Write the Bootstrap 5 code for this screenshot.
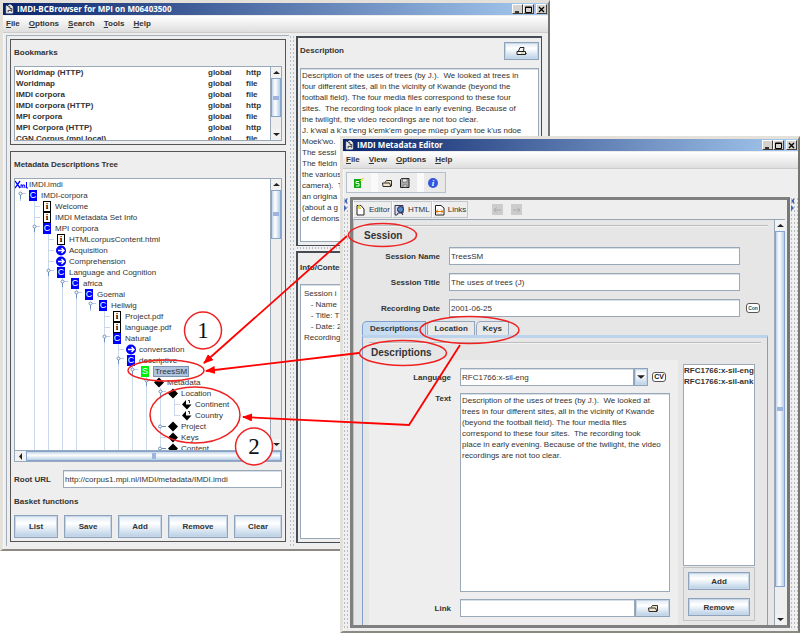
<!DOCTYPE html>
<html lang="en">
<head>
<meta charset="utf-8">
<meta name="viewport" content="width=device-width, initial-scale=1">
<title>IMDI-BCBrowser and IMDI Metadata Editor</title>
<link href="https://cdn.jsdelivr.net/npm/bootstrap@5.3.0/dist/css/bootstrap.min.css" rel="stylesheet">
<style>
:root{--edge:#99a9ba;--face:#eee;--guide:#c9d9ea;--ink:#333}
body{font-family:"Liberation Sans",Arial,sans-serif;font-size:8px;line-height:11px;color:var(--ink);background:#fff}
.desktop{position:relative;min-height:100vh;overflow:hidden}
.shrinkable{min-width:0;min-height:0}
.win{position:absolute;background:var(--face);border:3px solid #e3e1da;border-right:2px solid #77756f;border-bottom:2px solid #8b8982;box-shadow:inset 1px 1px 0 #f8f8f5}
.win-browser{left:0;top:0;width:calc(69% - 2px);height:551px}
.win-editor{left:340px;top:136px;right:0;bottom:0}
.titlebar{height:12px;margin-bottom:1px;padding:0 1px 0 2px;gap:3px;background:linear-gradient(90deg,#0a246a,#a6caf0);color:#fff;font:bold 8px/12px "Open Sans","Noto Sans",sans-serif}
.titlebar svg{width:9px;height:10px}
.winbtn{width:11px;height:10px;padding:0;border:1px solid;border-color:#fff #404040 #404040 #fff;background:#d6d3ce;display:flex;align-items:center;justify-content:center}
.winbtn:last-child{margin-left:2px}
.winbtn svg{width:7px;height:7px}
.menus{height:17px;padding:0 3px;gap:9px;background:linear-gradient(#fff,#dedede);border-bottom:1px solid #ccc;font-weight:bold}
.menus a{color:var(--ink);text-decoration:none;line-height:15px}
.browser-body{padding:2px 6px 3px 3px}
.panel{border:1px solid #555;padding:3px;min-height:0}
.sunk{border:2px solid #454c54;border-right-width:1px;border-bottom-width:1px;padding:4px 2px 3px}
.panel h2,.cap{font-size:8px;line-height:11px;font-weight:bold;margin:0}
.bookmarks{flex:0 0 106px;margin-bottom:6px}
.panel-desc{flex:0 0 210px}
.panel-info h2{padding:5px 0 11px}
.well{background:#fff;border:1px solid var(--edge);min-width:0;min-height:0;overflow:hidden}
.left-pane{flex:0 0 283px;border-left:1px solid #a4b0bc;border-top:1px solid #a4b0bc;padding:3px 3px 4px}
.right-pane{min-width:0;padding:1px 0 3px 2px}
.grip{flex:0 0 5px;background:radial-gradient(circle,#b4bcc6 0 1px,transparent 1px) 0 0/3px 4px,#f0f0f0}
.grip.west{flex-basis:7px}
.grip.east{flex-basis:8px}
.vbar{flex:0 0 11px;border-left:1px solid var(--edge);background:#eee;display:flex;flex-direction:column}
.vbar button,.hbar button{border:0;padding:0;background:#f2f2f2;flex:0 0 11px;display:flex;align-items:center;justify-content:center;line-height:0}
.vbar svg,.hbar svg{width:7px;height:7px}
.thumb{border:1px solid #86a4d0;background:linear-gradient(90deg,#c3d5e9,#fff 40%,#b8cfe5);display:flex;align-items:center;justify-content:center}
.thumb::after{content:"";width:6px;height:4px;background:#9db4dc}
.hbar{flex:0 0 11px;border-top:1px solid var(--edge);display:flex;background:#eee}
.hbar .thumb{background:linear-gradient(#c3d5e9,#fff 40%,#b8cfe5);flex:1}
.hbar .thumb::after{width:4px;height:6px}
.marks{width:100%;font-weight:bold;border-collapse:collapse;table-layout:fixed;margin-left:1px}
.marks td{padding:0;height:11px;line-height:11px;white-space:nowrap}
.marks .scope{width:38px}
.marks .proto{width:25px}
.tree,.tree ul{list-style:none;margin:0;padding:0}
.tree{margin-left:-2px;white-space:nowrap}
.tree ul{margin-left:14px;background:linear-gradient(var(--guide),var(--guide)) 7px 0/1px 100% no-repeat}
.tree ul.root-level{margin-left:0}
.tree ul.only{background:none}
.tree ul.closed{background-size:1px calc(100% - 5px)}
.node{height:11px;display:flex;align-items:center}
.node svg{flex:none;width:14px;height:11px;display:block}
.node b{flex:none;width:8px;height:11px;margin:0 4px 0 2px;text-align:center;font:9px/11px "Liberation Sans",sans-serif;color:#fff;background:#00f}
.node b.inf{background:#fff;color:#000;border:1px solid #000;font-weight:bold;line-height:9px;font-family:"Liberation Serif",serif}
.node b.ses{background:#0e0}
.node em{font-style:normal}
.node .sel{background:#b0c4de;border:1px solid #7e93b0;line-height:9px;padding:0 1px}
.cap.url{flex:0 0 49px}
.basket{gap:6px}
.field{background:#fff;border:1px solid var(--edge);border-radius:0;padding:0 1px;font-size:8px;line-height:11px;color:var(--ink);height:18px;min-width:0;box-shadow:inset 0 1px 0 #d8dfe6}
textarea.field{display:block;width:100%;height:auto;resize:none;overflow:hidden;white-space:pre;padding:1px}
textarea.field.roomy{padding:3px}
.jbtn{border:1px solid #8da3bb;border-radius:0;background:linear-gradient(#dfe9f3,#fff 35%,#b8cfe5);font-size:8px;line-height:11px;font-weight:bold;color:var(--ink);padding:0;height:18px;box-shadow:inset 0 0 0 1px #c7d6e6;display:flex;align-items:center;justify-content:center}
.jbtn.wide{width:35px}
.jbtn.drop{width:14px}
.basket .jbtn{height:23px;flex:1 1 0;padding:0 1px}
.basket .jbtn:nth-child(4){flex-grow:1.4}
.basket .jbtn:nth-child(2),.basket .jbtn:nth-child(5){flex-grow:1.1}
.toolset-row{padding:3px}
.toolset{border:1px solid #b4c0cc;height:21px;padding:0 3px;background:linear-gradient(90deg,#f4f4f4,#e8e8e8)}
.toolset i{width:7px;height:19px;margin:0 3px;background:#fafafa}
.toolset button,.views button{border:0;background:none;padding:0;display:flex;align-items:center}
.toolset button{margin:0 3px}
.toolset i+button{margin-left:0}
.toolset svg{width:12px;height:12px}
.editor-body{padding:1px 0 3px}
.editor-frame{border:3px solid #808080;border-right-color:#777;padding-right:2px;min-width:0;min-height:0}
.views{height:17px;margin:1px 0}
.views button{border:1px solid #c3c8ce;border-left-color:#fff;background:#eee;height:17px;gap:3px;padding:0 1px;font-size:8px;color:var(--ink)}
.views svg{width:11px;height:12px}
.views .steps{gap:8px;margin-left:24px}
.sheet{background:#e6e6e6;border-top:1px solid #96a4b4;border-left:1px solid #b7c3cf;min-height:0}
.sheet-body{min-width:0;padding:5px 6px 0 8px}
.big{font-size:10px;line-height:13px;font-weight:bold;margin:0;padding:3px 0 1px 2px}
.session{gap:8px;margin-top:4px;padding-right:8px}
.lab{font-weight:bold;text-align:right;flex:none;width:78px;margin-right:9px}
.light .lab{width:82px}
.tail{width:20px}
.rule{height:1px;background:#bdbdbd;box-shadow:0 1px 0 #f2f2f2}
.tabs{gap:1px;border:0;margin-top:4px}
.tabs .nav-link{border:1px solid #94a6bd;border-bottom:0;border-radius:5px 0 0 0;background:#e9e9e9;color:var(--ink);font-weight:bold;font-size:8px;line-height:11px;padding:1px 6px;height:14px;margin:0}
.tabs .nav-link.active{background:#c8dcf2;color:var(--ink);border-color:#7f9fcc;padding:1px 7px}
.tabpane{border:1px solid #7f9fcc;border-top:3px solid #bcd3ee;border-bottom:0;min-height:0;padding:4px 6px 0 6px}
.split{min-height:0;padding-right:6px}
.light{background:#eee;min-width:0;padding:8px 8px 8px 0;gap:7px}
.langs{flex:0 0 77px;padding:4px 0 4px 5px}
.langs .well{white-space:nowrap}
.langbtns{border:1px solid #c4c4c4;margin-top:1px;padding:4px;gap:8px}
.tiny{border:1px solid #555;border-radius:3px;background:#fff;height:10px;width:14px;padding:0;line-height:8px;font-weight:bold;font-size:7px;color:#111;flex:none}
.tiny.cv{margin:0 4px}
.tiny.con{font-size:5px;color:#0a5870}
.notes{position:absolute;left:0;top:0;width:800px;height:633px;pointer-events:none}
.notes text{font:23px "Liberation Serif",serif;fill:#111;text-anchor:middle}
</style>
<script src="https://cdn.jsdelivr.net/npm/bootstrap@5.3.0/dist/js/bootstrap.bundle.min.js"></script>
</head>
<body>
<svg width="0" height="0" class="position-absolute" aria-hidden="true">
<defs>
<g id="doc"><path d="M1 2V10H8V3L6 1H4L3 3Z" fill="#eee" stroke="#ddd"/><path d="M3 3h2v2h2v2H3v2M6 8h1" stroke="#222" fill="none"/></g>
<path id="up" d="M0 5L3.500 2L7 5Z" fill="#222"/>
<path id="down" d="M0 2L3.500 5L7 2Z" fill="#222"/>
<path id="leftw" d="M5 0L2 3.500L5 7Z" fill="#222"/>
<g id="open" fill="none" stroke="#6c8fc0"><path d="M7.500 5V11M9 3.500H13" stroke="#b9cde4"/><path d="M7.500 5V9"/><circle cx="7.500" cy="3.500" r="1.500" fill="#fff"/></g>
<g id="shut" fill="none" stroke="#6c8fc0"><path d="M9 5.500H13"/><circle cx="7" cy="5.500" r="1.500" fill="#fff"/></g>
<path id="leaf" d="M8 5.500H13" stroke="#c9d9ea"/>
<g id="go"><circle cx="6" cy="5.500" r="5" fill="#00f"/><path d="M3 5.500H9M6.500 3L9 5.500L6.500 8" stroke="#fff" stroke-width="1.400" fill="none"/></g>
<path id="dia" d="M6 0.500L11 5.500L6 10.500L1 5.500Z" fill="#000"/>
<g id="part"><path d="M5 1V5.500H10.500L6 10.500L1 5.500Z" fill="#000"/><path d="M7 1.500H8.500V4" stroke="#000" stroke-width=".8" fill="none"/></g>
<g id="folder"><path d="M2 9.500L1.500 6H8.500L10 9.500ZM4 5.500L5.500 3.500H10.500V9" fill="#f0e6cf" stroke="#332e24"/></g>
<path id="wmin" d="M1 6H5" stroke="#000" stroke-width="1.500"/>
<path id="wmax" d="M.5 1H6.500V6.500H.5ZM.5 1.500H6.500" fill="none" stroke="#000"/>
<path id="wx" d="M1 1L6 6M6 1L1 6" stroke="#000" stroke-width="1.300"/>
<path id="turn" d="M4 1L1 4L4 7ZM1 8L4 11L1 14Z" fill="#46b"/>
</defs>
</svg>
<main class="desktop">

<section class="win win-browser d-flex flex-column" aria-label="IMDI-BCBrowser">
  <header class="titlebar d-flex align-items-center">
    <svg viewBox="0 0 9 11"><use href="#doc"/></svg><span class="flex-grow-1 text-nowrap">IMDI-BCBrowser for MPI on M06403500</span>
    <span class="d-flex"><button class="winbtn" aria-label="Minimize"><svg viewBox="0 0 7 7"><use href="#wmin"/></svg></button><button class="winbtn" aria-label="Maximize"><svg viewBox="0 0 7 7"><use href="#wmax"/></svg></button><button class="winbtn" aria-label="Close"><svg viewBox="0 0 7 7"><use href="#wx"/></svg></button></span>
  </header>
  <nav class="menus d-flex"><a href="#"><u>F</u>ile</a><a href="#"><u>O</u>ptions</a><a href="#"><u>S</u>earch</a><a href="#"><u>T</u>ools</a><a href="#"><u>H</u>elp</a></nav>
  <div class="browser-body shrinkable d-flex flex-grow-1">
    <div class="left-pane d-flex flex-column">
      <div class="panel bookmarks d-flex flex-column">
        <h2 class="mt-1 mb-2">Bookmarks</h2>
        <div class="well d-flex flex-grow-1">
          <div class="flex-grow-1 overflow-hidden">
            <table class="marks"><colgroup><col><col class="scope"><col class="proto"></colgroup>
            <tbody>
            <tr><td>Worldmap (HTTP)</td><td>global</td><td>http</td></tr>
            <tr><td>Worldmap</td><td>global</td><td>file</td></tr>
            <tr><td>IMDI corpora</td><td>global</td><td>file</td></tr>
            <tr><td>IMDI corpora (HTTP)</td><td>global</td><td>http</td></tr>
            <tr><td>MPI corpora</td><td>global</td><td>file</td></tr>
            <tr><td>MPI Corpora (HTTP)</td><td>global</td><td>http</td></tr>
            <tr><td>CGN Corpus (mpi.local)</td><td>global</td><td>file</td></tr>
            </tbody></table>
          </div>
          <div class="vbar"><button aria-label="Up"><svg viewBox="0 0 7 7"><use href="#up"/></svg></button><div class="thumb" style="height:54%"></div><div class="flex-grow-1"></div><button aria-label="Down"><svg viewBox="0 0 7 7"><use href="#down"/></svg></button></div>
        </div>
      </div>
      <div class="panel d-flex flex-column flex-grow-1">
        <h2 class="mt-1 mb-2">Metadata Descriptions Tree</h2>
        <div class="well d-flex flex-column flex-grow-1">
          <div class="shrinkable d-flex flex-grow-1">
            <div class="flex-grow-1 overflow-hidden">
              <div class="node"><svg viewBox="0 0 14 11"><path d="M0 2L5 9M5 2L0 9" stroke="#00f" stroke-width="1.300"/><path d="M6 9V5.500M6 6Q8 4.500 8 9M8 6Q10 4.500 10 9M11.500 3V9H13" stroke="#00f" fill="none"/></svg><em>IMDI.imdi</em></div>
              <div class="tree"><ul class="root-level only"><li>
                <div class="node"><svg><use href="#open"/></svg><b>C</b><em>IMDI-corpora</em></div>
                <ul>
                  <li class="node"><svg><use href="#leaf"/></svg><b class="inf">i</b><em>Welcome</em></li>
                  <li class="node"><svg><use href="#leaf"/></svg><b class="inf">i</b><em>IMDI Metadata Set Info</em></li>
                  <li><div class="node"><svg><use href="#open"/></svg><b>C</b><em>MPI corpora</em></div>
                  <ul>
                    <li class="node"><svg><use href="#leaf"/></svg><b class="inf">i</b><em>HTMLcorpusContent.html</em></li>
                    <li class="node"><svg><use href="#leaf"/></svg><svg><use href="#go"/></svg><em>Acquisition</em></li>
                    <li class="node"><svg><use href="#leaf"/></svg><svg><use href="#go"/></svg><em>Comprehension</em></li>
                    <li><div class="node"><svg><use href="#open"/></svg><b>C</b><em>Language and Cognition</em></div>
                    <ul><li><div class="node"><svg><use href="#open"/></svg><b>C</b><em>africa</em></div>
                    <ul><li><div class="node"><svg><use href="#open"/></svg><b>C</b><em>Goemai</em></div>
                    <ul class="only"><li><div class="node"><svg><use href="#open"/></svg><b>C</b><em>Hellwig</em></div>
                    <ul>
                      <li class="node"><svg><use href="#leaf"/></svg><b class="inf">i</b><em>Project.pdf</em></li>
                      <li class="node"><svg><use href="#leaf"/></svg><b class="inf">i</b><em>language.pdf</em></li>
                      <li><div class="node"><svg><use href="#open"/></svg><b>C</b><em>Natural</em></div>
                      <ul>
                        <li class="node"><svg><use href="#leaf"/></svg><svg><use href="#go"/></svg><em>conversation</em></li>
                        <li><div class="node"><svg><use href="#open"/></svg><b>C</b><em>descriptive</em></div>
                        <ul><li><div class="node"><svg><use href="#open"/></svg><b class="ses">S</b><em class="sel">TreesSM</em></div>
                        <ul><li><div class="node"><svg><use href="#open"/></svg><svg><use href="#dia"/></svg><em>Metadata</em></div>
                        <ul>
                          <li><div class="node"><svg><use href="#open"/></svg><svg><use href="#dia"/></svg><em>Location</em></div>
                          <ul class="closed">
                            <li class="node"><svg><use href="#leaf"/></svg><svg><use href="#part"/></svg><em>Continent</em></li>
                            <li class="node"><svg><use href="#leaf"/></svg><svg><use href="#part"/></svg><em>Country</em></li>
                          </ul></li>
                          <li class="node"><svg><use href="#shut"/></svg><svg><use href="#dia"/></svg><em>Project</em></li>
                          <li class="node"><svg><use href="#leaf"/></svg><svg><use href="#dia"/></svg><em>Keys</em></li>
                          <li class="node"><svg><use href="#shut"/></svg><svg><use href="#dia"/></svg><em>Content</em></li>
                        </ul></li></ul></li></ul></li></ul></li></ul></li></ul></li></ul></li></ul></li></ul></li></ul></li></ul>
              </div>
            </div>
            <div class="vbar"><button aria-label="Up"><svg viewBox="0 0 7 7"><use href="#up"/></svg></button><div class="thumb" style="height:18%"></div><div class="flex-grow-1"></div><button aria-label="Down"><svg viewBox="0 0 7 7"><use href="#down"/></svg></button></div>
          </div>
          <div class="hbar"><button aria-label="Left"><svg viewBox="0 0 7 7"><use href="#leftw"/></svg></button><div class="thumb"></div></div>
        </div>
        <div class="d-flex align-items-center mt-2"><label class="cap url" for="url">Root URL</label><input id="url" class="field flex-grow-1" value="http://corpus1.mpi.nl/IMDI/metadata/IMDI.imdi"></div>
        <h2 class="my-2">Basket functions</h2>
        <div class="basket d-flex">
          <button class="jbtn">List</button><button class="jbtn">Save</button><button class="jbtn">Add</button><button class="jbtn">Remove</button><button class="jbtn">Clear</button>
        </div>
      </div>
    </div>
    <div class="grip"></div>
    <div class="right-pane d-flex flex-column flex-grow-1">
      <div class="panel sunk panel-desc d-flex flex-column">
        <div class="d-flex align-items-center justify-content-between mb-2"><h2>Description</h2><button class="jbtn wide" aria-label="Print"><svg width="11" height="10" viewBox="0 0 11 10"><path d="M2.500 5L4 1.500H8L7.500 5M1 5.500H9.500V8.500H1ZM9.500 8.500L10.500 7" fill="#f4f4f4" stroke="#222"/><path d="M5 7H8" stroke="#cc3"/></svg></button></div>
        <textarea class="field flex-grow-1" readonly aria-label="Description">Description of the uses of trees (by J.).  We looked at trees in
four different sites, all in the vicinity of Kwande (beyond the
football field). The four media files correspond to these four
sites.  The recording took place in early evening. Because of
the twilight, the video recordings are not too clear.
J. k'wal a k'a t'eng k'emk'em goepe mûep d'yam toe k'us ndoe
Moek'wo.
The sessi
The fieldn
the various
camera).  T
an origina
(about a g
of demons</textarea>
      </div>
      <div class="grip"></div>
      <div class="panel sunk panel-info d-flex flex-column flex-grow-1">
        <h2>Info/Contents</h2>
        <textarea class="field roomy flex-grow-1" readonly aria-label="Info">Session i
   - Name
   - Title: T
   - Date: 2
Recording</textarea>
      </div>
    </div>
  </div>
</section>

<section class="win win-editor d-flex flex-column" aria-label="IMDI Metadata Editor">
  <header class="titlebar d-flex align-items-center">
    <svg viewBox="0 0 9 11"><use href="#doc"/></svg><span class="flex-grow-1">IMDI Metadata Editor</span>
    <span class="d-flex"><button class="winbtn" aria-label="Minimize"><svg viewBox="0 0 7 7"><use href="#wmin"/></svg></button><button class="winbtn" aria-label="Maximize"><svg viewBox="0 0 7 7"><use href="#wmax"/></svg></button><button class="winbtn" aria-label="Close"><svg viewBox="0 0 7 7"><use href="#wx"/></svg></button></span>
  </header>
  <nav class="menus d-flex"><a href="#"><u>F</u>ile</a><a href="#"><u>V</u>iew</a><a href="#"><u>O</u>ptions</a><a href="#"><u>H</u>elp</a></nav>
  <div class="toolset-row"><div class="toolset d-inline-flex align-items-center">
    <button aria-label="New session"><svg viewBox="0 0 12 12"><path d="M1 2H8V11H1Z" fill="#1a1"/><path d="M6 4.500H3V6.500H6V9H3" stroke="#dfd" fill="none"/><path d="M7 4L11 1M9 1V4" stroke="#dd2"/></svg></button><i></i>
    <button aria-label="Open"><svg viewBox="0 0 12 12"><use href="#folder"/></svg></button>
    <button aria-label="Save"><svg viewBox="0 0 12 12"><path d="M1.500 2.500L2.500 1.500H10V10.500H1.500Z" fill="#aaa" stroke="#222"/><path d="M3.500 2H8V5H3.500ZM4 8H8V10H4Z" fill="#eee" stroke="#555" stroke-width=".6"/></svg></button><i></i>
    <button aria-label="About"><svg viewBox="0 0 12 12"><circle cx="6" cy="6" r="5" fill="#35d"/><text x="6" y="9" text-anchor="middle" font-family="Liberation Serif,serif" font-style="italic" font-weight="bold" font-size="9" fill="#fff">i</text></svg></button>
  </div></div>
  <div class="editor-body shrinkable d-flex flex-grow-1">
    <div class="grip west"><svg class="d-block" width="6" height="14" viewBox="0 0 6 14"><use href="#turn"/></svg></div>
    <div class="editor-frame d-flex flex-column flex-grow-1">
      <div class="views d-flex align-items-center">
        <button><svg viewBox="0 0 11 12"><path d="M2 1.500H6L9 5V11H2Z" fill="#fff" stroke="#222"/><path d="M3 4H6M3 2H5" stroke="#dc2" stroke-width="1.500"/></svg>Editor</button><button><svg viewBox="0 0 11 12"><path d="M1 1.500H9V9H4L3 11H1Z" fill="#dde" stroke="#335"/><circle cx="6.500" cy="5.500" r="3" fill="#58c" stroke="#224"/><path d="M7 8L9 11" stroke="#224"/></svg>HTML</button><button><svg viewBox="0 0 11 12"><path d="M1.500 1.500H7L10 4V11H1.500Z" fill="#fff" stroke="#222"/><path d="M2 7.500H9M4 5.500L2 7.500L4 9.500M7 5.500L9 7.500L7 9.500" stroke="#d70" fill="none"/></svg>Links</button>
        <span class="steps d-flex"><svg viewBox="0 0 11 12"><path d="M0 0H11V11H0Z" fill="#ccc"/><path d="M9 6H2M4.500 3.500L2 6L4.500 8.500" stroke="#aaa" fill="none"/></svg><svg viewBox="0 0 11 12"><path d="M0 0H11V11H0Z" fill="#ccc"/><path d="M2 6H9M6.500 3.500L9 6L6.500 8.500" stroke="#aaa" fill="none"/></svg></span>
      </div>
      <div class="sheet d-flex flex-grow-1">
        <div class="sheet-body d-flex flex-column flex-grow-1">
          <div class="rule"></div>
          <h1 class="big">Session</h1>
          <form class="session d-flex flex-column">
            <div class="d-flex align-items-center"><label class="lab" for="sn">Session Name</label><input id="sn" class="field flex-grow-1" value="TreesSM"><span class="tail"></span></div>
            <div class="d-flex align-items-center"><label class="lab" for="st">Session Title</label><input id="st" class="field flex-grow-1" value="The uses of trees (J)"><span class="tail"></span></div>
            <div class="d-flex align-items-center"><label class="lab" for="rd">Recording Date</label><input id="rd" class="field flex-grow-1" value="2001-06-25"><span class="tail d-flex justify-content-end"><button type="button" class="tiny con">Con</button></span></div>
          </form>
          <div class="nav nav-tabs tabs"><button class="nav-link active">Descriptions</button><button class="nav-link">Location</button><button class="nav-link">Keys</button></div>
          <div class="tabpane d-flex flex-column flex-grow-1">
            <div class="rule"></div>
            <h2 class="big">Descriptions</h2>
            <div class="split d-flex flex-grow-1">
              <div class="light d-flex flex-column flex-grow-1">
                <div class="d-flex align-items-center"><label class="lab" for="lg">Language</label><input id="lg" class="field flex-grow-1" value="RFC1766:x-sil-eng"><button class="jbtn drop" aria-label="Choose language"><svg width="8" height="8" viewBox="0 0 7 7"><use href="#down"/></svg></button><button class="tiny cv">CV</button></div>
                <div class="shrinkable d-flex flex-grow-1"><label class="lab" for="tx">Text</label><textarea id="tx" class="field">Description of the uses of trees (by J.).  We looked at
trees in four different sites, all in the vicinity of Kwande
(beyond the football field). The four media files
correspond to these four sites.  The recording took
place in early evening. Because of the twilight, the video
recordings are not too clear.</textarea></div>
                <div class="d-flex align-items-center"><label class="lab" for="lk">Link</label><input id="lk" class="field flex-grow-1"><button class="jbtn wide" aria-label="Browse"><svg width="12" height="12" viewBox="0 0 12 12"><use href="#folder"/></svg></button></div>
              </div>
              <div class="langs d-flex flex-column">
                <div class="well flex-grow-1 fw-bold">RFC1766:x-sil-eng<br>RFC1766:x-sil-ank</div>
                <div class="langbtns d-flex flex-column"><button class="jbtn">Add</button><button class="jbtn">Remove</button></div>
              </div>
            </div>
          </div>
        </div>
        <div class="vbar"><button aria-label="Up"><svg viewBox="0 0 7 7"><use href="#up"/></svg></button><div class="thumb" style="height:88%"></div><div class="flex-grow-1"></div><button aria-label="Down"><svg viewBox="0 0 7 7"><use href="#down"/></svg></button></div>
      </div>
    </div>
    <div class="grip east"><svg class="d-block" width="6" height="14" viewBox="0 0 6 14"><use href="#turn"/></svg></div>
  </div>
</section>

<svg class="notes" viewBox="0 0 800 633" fill="none" stroke="#f00" stroke-width="1.500">
  <defs><marker id="tip" viewBox="0 0 10 8" refX="9" refY="4" markerWidth="10" markerHeight="8" markerUnits="userSpaceOnUse" orient="auto"><path d="M0 0L10 4L0 8Z" fill="#f00" stroke="none"/></marker></defs>
  <g stroke="#e22"><ellipse cx="382.500" cy="235" rx="34" ry="11.500"/><ellipse cx="403" cy="353" rx="43.500" ry="12.500"/><ellipse cx="469.500" cy="330" rx="49.500" ry="13.500"/><ellipse cx="166" cy="370.500" rx="38" ry="10.500"/><ellipse cx="195" cy="415" rx="45" ry="28"/></g>
  <g stroke="#e22" fill="#fff"><circle cx="203" cy="330.500" r="18.500"/><circle cx="254" cy="446.500" r="18.500"/></g>
  <g stroke-width="1.800"><path d="M347 236L204 363" marker-end="url(#tip)"/><path d="M359 353L206 371" marker-end="url(#tip)"/><path d="M460 345L409 425L243 417" marker-end="url(#tip)"/></g>
  <g stroke="none"><text x="203" y="338">1</text><text x="254" y="454">2</text></g>
</svg>
</main>
</body>
</html>
